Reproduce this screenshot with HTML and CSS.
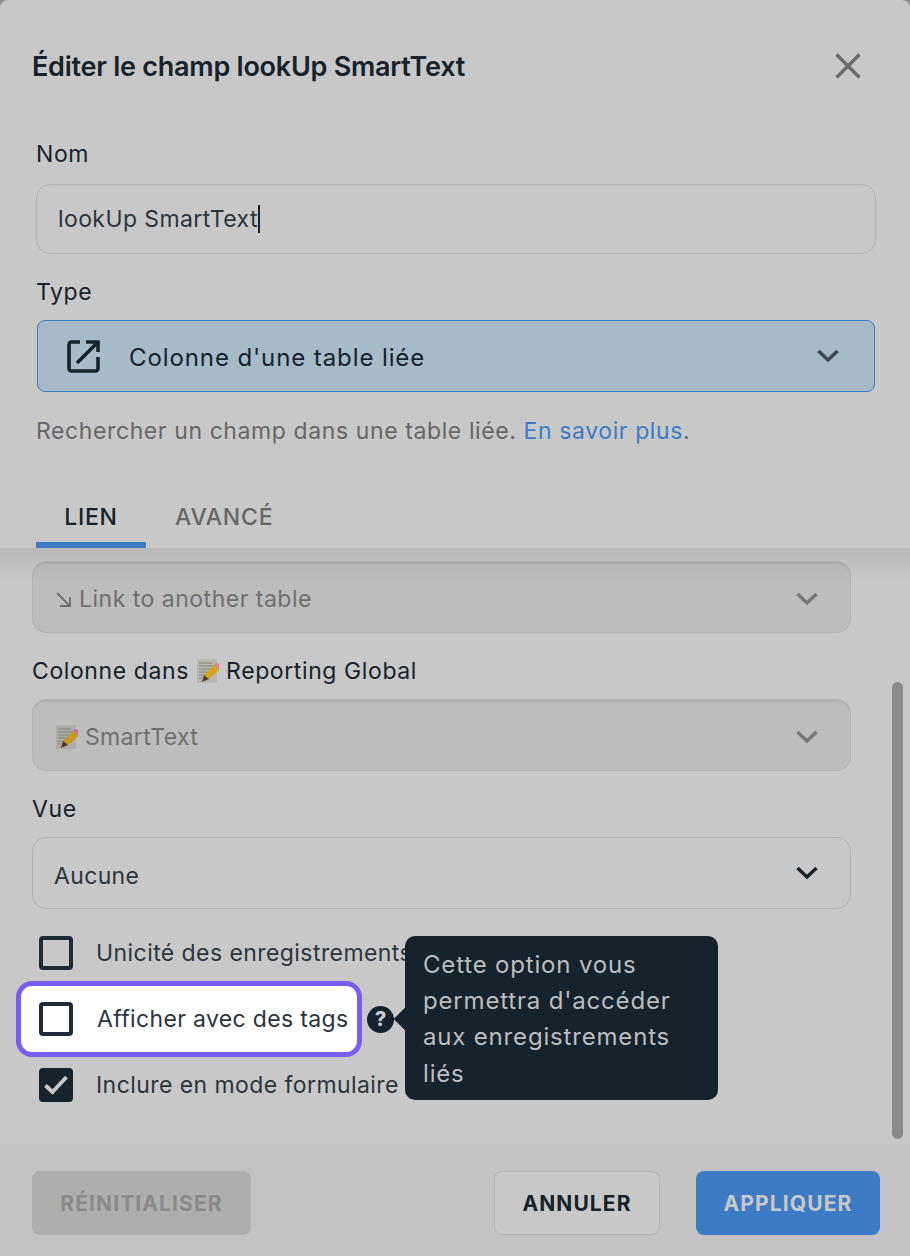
FILE: index.html
```html
<!DOCTYPE html>
<html lang="fr">
<head>
<meta charset="utf-8">
<title>Éditer le champ</title>
<link rel="stylesheet" href="styles.css">
</head>
<body>
<div class="modal">
  <header class="head">
    <h1 class="title">Éditer le champ lookUp SmartText</h1>
    <svg class="close" width="28" height="28" viewBox="0 0 28 28"><path d="M2.500 2.500L25.500 25.500M25.500 2.500L2.500 25.500" fill="none" stroke="#6a6a6a" stroke-width="3.400"/></svg>
  </header>
  <section class="fields">
    <div class="label label-first">Nom</div>
    <div class="input">lookUp SmartText<span class="caret"></span></div>
    <div class="label">Type</div>
    <div class="type">
      <svg class="type-icon" width="33" height="33" viewBox="0 0 33 33"><path d="M13 2H4.500A2.500 2.500 0 0 0 2 4.500V28.500A2.500 2.500 0 0 0 4.500 31H28.500A2.500 2.500 0 0 0 31 28.500V17" fill="none" stroke="#16222c" stroke-width="3.600"/><path d="M10 23L30 3M19 2H31V12" fill="none" stroke="#16222c" stroke-width="3.600"/></svg>
      <span class="type-text">Colonne d'une table liée</span>
      <svg class="chev" width="22" height="14" viewBox="0 0 22 14"><path d="M1.500 2L11 11L20.500 2" fill="none" stroke="#3d4750" stroke-width="3.400"/></svg>
    </div>
    <p class="help">Rechercher un champ dans une table liée. <span class="link">En savoir plus</span>.</p>
  </section>
  <nav class="tabs">
    <div class="tab tab-active">LIEN</div>
    <div class="tab">AVANCÉ</div>
  </nav>
  <main class="body">
    <div class="select select-off select-link"><svg class="arrow" width="15" height="15" viewBox="0 0 15 15"><path d="M1 1L14 14M14 5V14H4" fill="none" stroke="#6f6f6f" stroke-width="1.800"/></svg><span>Link to another table</span>
      <svg class="chev" width="22" height="14" viewBox="0 0 22 14"><path d="M1.500 2L11 11L20.500 2" fill="none" stroke="#777" stroke-width="3.400"/></svg>
    </div>
    <div class="label">Colonne dans <svg class="memo" width="22" height="24" viewBox="0 0 22 24"><rect width="20" height="24" fill="#b7b7b3"/><path d="M2 4H15M2 7H17M2 10H13M2 13H10M2 16H7M2 19H5" stroke="#85857e" stroke-width="1"/><path d="M5 23L7 16L17 6L22 11L12 20Z" fill="#d9a521"/><path d="M5 23L7 16L12 20Z" fill="#4a4030"/><path d="M17 6L19 4L22 5L22 11Z" fill="#d9808a"/></svg> Reporting Global</div>
    <div class="select select-off"><svg class="memo memo-off" width="22" height="24" viewBox="0 0 22 24"><rect width="20" height="24" fill="#acaca9"/><path d="M2 4H15M2 7H17M2 10H13M2 13H10M2 16H7M2 19H5" stroke="#85857e" stroke-width="1"/><path d="M5 23L7 16L17 6L22 11L12 20Z" fill="#c9991e"/><path d="M5 23L7 16L12 20Z" fill="#4a4030"/><path d="M17 6L19 4L22 5L22 11Z" fill="#c97880"/></svg><span>SmartText</span>
      <svg class="chev" width="22" height="14" viewBox="0 0 22 14"><path d="M1.500 2L11 11L20.500 2" fill="none" stroke="#777" stroke-width="3.400"/></svg>
    </div>
    <div class="label">Vue</div>
    <div class="select select-on"><span>Aucune</span>
      <svg class="chev" width="22" height="14" viewBox="0 0 22 14"><path d="M1.500 2L11 11L20.500 2" fill="none" stroke="#16222c" stroke-width="3.400"/></svg>
    </div>
    <div class="checks">
      <div class="check-row"><span class="box"></span><span class="check-text">Unicité des enregistrements</span></div>
      <div class="check-row">
        <div class="spot"><span class="box"></span><span class="check-text">Afficher avec des tags</span></div>
        <span class="q">?</span>
        <div class="tooltip">Cette option vous permettra d'accéder aux enregistrements liés</div>
      </div>
      <div class="check-row"><span class="box box-on"><svg width="26" height="22" viewBox="0 0 26 22"><path d="M2.500 11.500L9.500 18L23.500 3" fill="none" stroke="#c8c8c8" stroke-width="4"/></svg></span><span class="check-text">Inclure en mode formulaire</span></div>
    </div>
    <div class="scrollbar"></div>
  </main>
  <footer class="foot">
    <button class="btn btn-reset">RÉINITIALISER</button>
    <button class="btn btn-cancel">ANNULER</button>
    <button class="btn btn-apply">APPLIQUER</button>
  </footer>
</div>
</body>
</html>
```
FILE: styles.css
```css
* { box-sizing: border-box; }
html, body { margin: 0; padding: 0; }
body { background: #8f8f8f; font-family: Inter, "Liberation Sans", sans-serif; color: #16222c; }
.modal { width: 910px; height: 1256px; background: #c8c8c8; border-radius: 8px 8px 0 0; display: flex; flex-direction: column; overflow: hidden; }
.head { height: 132px; padding: 0 48px 0 32px; display: flex; align-items: center; justify-content: space-between; flex: none; }
.title { margin: 0; font-size: 27px; font-weight: 600; letter-spacing: -0.25px; }
.close { display: block; }
.fields { padding: 0 34px 0 36px; flex: none; }
.label { font-size: 23px; line-height: 32px; margin: 22px 0 14px; letter-spacing: 0.6px; display: flex; align-items: center; white-space: pre; }
.label-first { margin-top: 6px; }
.input { height: 70px; border: 1px solid #b3b3b3; border-radius: 14px; padding-left: 21px; display: flex; align-items: center; font-size: 23px; letter-spacing: 0.4px; color: #2b353e; }
.caret { width: 2px; height: 28px; background: #16222c; }
.type { height: 72px; margin: -2px 1px 0; border: 1px solid #3d7cc4; border-radius: 8px; background: #a7bac8; display: flex; align-items: center; padding: 0 35px 0 29px; }
.type-icon { flex: none; margin-right: 29px; }
.type-text { font-size: 24px; letter-spacing: 0.9px; flex: 1; padding-top: 2px; }
.help { margin: 23px 0 0; font-size: 23px; line-height: 32px; letter-spacing: 0.6px; color: #666; }
.link { color: #3d7cc4; }
.tabs { display: flex; margin: 39px 0 0 36px; height: 62px; flex: none; }
.tab { font-size: 23px; font-weight: 500; letter-spacing: 0.75px; color: #666; padding: 0 28px; line-height: 62px; height: 62px; margin-right: 1px; }
.tab-active { color: #16222c; border-bottom: 6px solid #3d7cc4; width: 110px; text-align: center; padding: 0; }
.body { position: relative; flex: 1; min-height: 0; padding: 13px 59px 0 32px; }
.body::before { content: ""; position: absolute; left: 0; right: 0; top: 0; height: 34px; background: linear-gradient(rgba(0, 0, 0, 0.08), rgba(0, 0, 0, 0)); }
.body .label { margin: 22px 0 12px; }
.select { height: 72px; border-radius: 14px; display: flex; align-items: center; padding: 0 32px 0 21px; font-size: 23px; letter-spacing: 0.35px; }
.select > span { flex: 1; }
.select-off { background: #bdbdbd; border: 1px solid #b3b3b3; box-shadow: inset 0 2px 0 #b3b3b3; color: #6f6f6f; padding-top: 4px; }
.select-link { letter-spacing: 0.5px; }
.select-on { border: 1px solid #b3b3b3; color: #2b353e; }
.select-on > span { padding-top: 6px; }
.arrow { margin: 0 8px 0 2px; flex: none; }
.memo { flex: none; }
.label .memo { margin: 0 0 0 1px; }
.memo-off { margin: 0 7px 0 2px; }
.checks { margin-top: 11px; }
.check-row { position: relative; height: 66px; display: flex; align-items: center; }
.box { width: 34px; height: 34px; border: 4px solid #1e2b36; border-radius: 4px; margin-left: 7px; margin-right: 23px; flex: none; display: flex; align-items: center; justify-content: center; }
.box-on { background: #16222c; border-color: #16222c; }
.check-text { font-size: 23px; letter-spacing: 0.43px; color: #2b353e; white-space: nowrap; }
.spot { display: flex; align-items: center; height: 76px; width: 346px; margin-left: -16px; padding-left: 11px; background: #fff; border: 5px solid #7b5cf0; border-radius: 16px; flex: none; }
.spot .box { margin-right: 24px; }
.spot .check-text { letter-spacing: 0.35px; }
.q { width: 27px; height: 27px; margin-left: 5px; border-radius: 50%; background: #16222c; color: #c8c8c8; font-size: 20px; font-weight: 800; display: flex; align-items: center; justify-content: center; flex: none; }
.tooltip { position: absolute; left: 373px; top: -50px; width: 313px; height: 164px; padding: 10.500px 18px; background: #16222c; border-radius: 10px; color: #bdbdbd; font-size: 24px; line-height: 36.400px; letter-spacing: 0.82px; }
.tooltip::before { content: ""; position: absolute; left: -8px; top: 75px; width: 16px; height: 16px; background: #16222c; transform: rotate(45deg); }
.scrollbar { position: absolute; left: 892px; top: 134px; width: 11px; height: 457px; border-radius: 6px; background: #8b8b8b; }
.foot { height: 112px; flex: none; background: #c3c3c3; padding: 27px 30px 21px 32px; display: flex; align-items: stretch; gap: 36px; }
.btn { font-family: Inter, "Liberation Sans", sans-serif; font-size: 21px; font-weight: 700; letter-spacing: 1.1px; border-radius: 8px; border: 1px solid transparent; padding: 0; }
.btn-reset { width: 219px; background: #aeaeae; color: #8a8a8a; margin-right: auto; }
.btn-cancel { width: 166px; background: #c8c8c8; border-color: #b3b3b3; color: #16222c; }
.btn-apply { width: 184px; background: #3d7cc4; color: #c8c8c8; }
```
